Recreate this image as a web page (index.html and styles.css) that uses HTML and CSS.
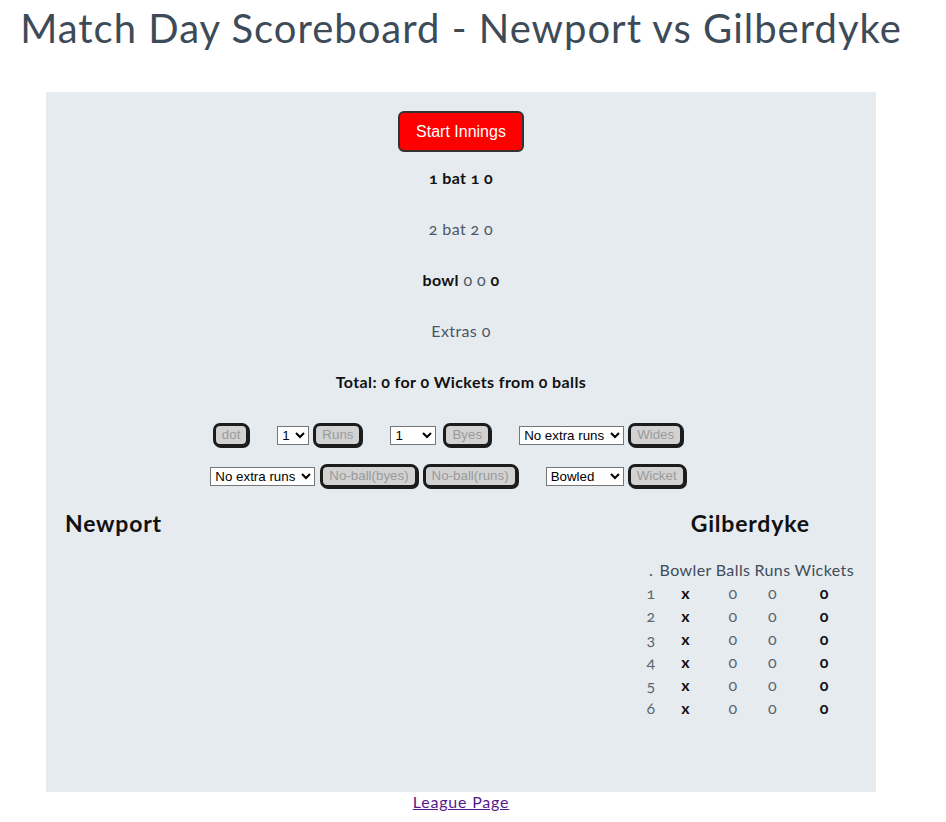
FILE: index.html
```html
<!DOCTYPE html>
<html>
<head>
<meta charset="utf-8">
<title>Match Day Scoreboard</title>
<link rel="stylesheet" href="styles.css">
</head>
<body>
<h1 class="title">Match Day Scoreboard - Newport vs Gilberdyke</h1>
<div class="panel">
  <div class="start-wrap"><button class="start">Start Innings</button></div>
  <div class="stats">
    <div class="line strong">1 bat 1 0</div>
    <div class="line muted">2 bat 2 0</div>
    <div class="line"><span class="strong">bowl</span> <span class="muted">0 0</span> <span class="strong">0</span></div>
    <div class="line muted">Extras 0</div>
    <div class="line strong">Total: 0 for 0 Wickets from 0 balls</div>
  </div>
  <div class="controls row1">
    <div class="group"><button class="act" disabled>dot</button></div>
    <div class="group"><select class="sel sel-n"><option>1</option></select><button class="act" disabled>Runs</button></div>
    <div class="group gap-wide"><select class="sel sel-b"><option>1</option></select><button class="act" disabled>Byes</button></div>
    <div class="group"><select class="sel sel-x"><option>No extra runs</option></select><button class="act" disabled>Wides</button></div>
  </div>
  <div class="controls row2">
    <div class="group gap-mid"><select class="sel sel-x"><option>No extra runs</option></select><button class="act" disabled>No-ball(byes)</button><button class="act" disabled>No-ball(runs)</button></div>
    <div class="group"><select class="sel sel-w"><option>Bowled</option></select><button class="act" disabled>Wicket</button></div>
  </div>
  <div class="teams">
    <div class="team">
      <h2 class="team-name">Newport</h2>
    </div>
    <div class="team team-right">
      <h2 class="team-name">Gilberdyke</h2>
      <table class="bowling">
        <thead>
          <tr><th class="c-num">.</th><th>Bowler</th><th>Balls</th><th>Runs</th><th>Wickets</th></tr>
        </thead>
        <tbody>
          <tr><td class="c-num">1</td><td class="b">x</td><td>0</td><td>0</td><td class="b">0</td></tr>
          <tr><td class="c-num">2</td><td class="b">x</td><td>0</td><td>0</td><td class="b">0</td></tr>
          <tr><td class="c-num">3</td><td class="b">x</td><td>0</td><td>0</td><td class="b">0</td></tr>
          <tr><td class="c-num">4</td><td class="b">x</td><td>0</td><td>0</td><td class="b">0</td></tr>
          <tr><td class="c-num">5</td><td class="b">x</td><td>0</td><td>0</td><td class="b">0</td></tr>
          <tr><td class="c-num">6</td><td class="b">x</td><td>0</td><td>0</td><td class="b">0</td></tr>
        </tbody>
      </table>
    </div>
  </div>
</div>
<div class="footer"><a class="league" href="#league">League Page</a></div>
</body>
</html>
```
FILE: styles.css
```css
body {
  margin: 8px;
  width: 906px;
  font-family: "Lato", "Open Sans", sans-serif;
  font-size: 16px;
  letter-spacing: 0.4px;
  color: #4a5663;
  font-variant-numeric: oldstyle-nums;
}
.title {
  margin: 0 0 44px 0;
  text-align: center;
  font-size: 40px;
  line-height: 40px;
  font-weight: 400;
  letter-spacing: 1px;
  color: #3d4b59;
}
.panel {
  width: 830px;
  height: 700px;
  margin: 0 auto;
  padding-top: 19px;
  box-sizing: border-box;
  background: #e6ebf0;
}
.start-wrap {
  display: flex;
  justify-content: center;
}
.start {
  font-family: "Liberation Sans", Arial, sans-serif;
  font-size: 16px;
  line-height: 17px;
  letter-spacing: 0;
  padding: 10px 16px;
  color: #fff;
  background: #ff0000;
  border: 2px solid #333;
  border-radius: 6px;
}
.stats {
  margin-top: 16px;
  display: flex;
  flex-direction: column;
  align-items: center;
  gap: 32px;
}
.line {
  line-height: 19px;
}
.strong {
  font-weight: 700;
  color: #111;
}
.muted {
  font-weight: 400;
  color: #4a5663;
}
.controls {
  display: flex;
  justify-content: center;
  align-items: center;
  gap: 28px;
  padding-right: 26px;
  letter-spacing: 0;
}
.row1 {
  margin-top: 32px;
}
.row2 {
  margin-top: 17px;
}
.group {
  display: flex;
  align-items: center;
  gap: 4px;
}
.gap-wide {
  gap: 7px;
}
.gap-mid {
  gap: 5px;
}
.act {
  font-family: "Liberation Sans", Arial, sans-serif;
  font-size: 13.33px;
  line-height: 16px;
  padding: 1px 6px;
  color: #9a9a9a;
  background: #d2d2d2;
  border: 3px solid #1c1c1c;
  border-radius: 7px;
  box-shadow: 1px 1px 0 #1c1c1c;
}
.sel {
  font-family: "Liberation Sans", Arial, sans-serif;
  font-size: 13.33px;
  height: 19px;
  padding: 0;
  background: #fff;
  color: #000;
  border: 1px solid #767676;
  border-radius: 0;
}
.sel-n { width: 32px; }
.sel-b { width: 46px; }
.sel-x { width: 105px; }
.sel-w { width: 78px; }
.teams {
  display: flex;
  justify-content: space-between;
  align-items: flex-start;
  padding: 0 19px 0 19px;
  margin-top: 22px;
}
.team-name {
  margin: 0;
  font-size: 23px;
  line-height: 26px;
  font-weight: 700;
  letter-spacing: 0.8px;
  color: #111;
}
.team-right {
  display: flex;
  flex-direction: column;
  align-items: center;
}
.bowling {
  margin-top: 21px;
  border-spacing: 2px;
  font-size: 16px;
  letter-spacing: 0.4px;
}
.bowling th {
  font-weight: 400;
  color: #3f4d5a;
  padding: 1px;
  line-height: 19px;
}
.bowling td {
  text-align: center;
  padding: 1px;
  line-height: 19px;
  color: #5a6570;
}
.bowling td.b {
  font-weight: 700;
  color: #111;
}
.bowling .c-num {
  width: 8px;
}
.footer {
  text-align: center;
  line-height: 19px;
}
.league {
  color: #551a8b;
  letter-spacing: 0.8px;
}
```
